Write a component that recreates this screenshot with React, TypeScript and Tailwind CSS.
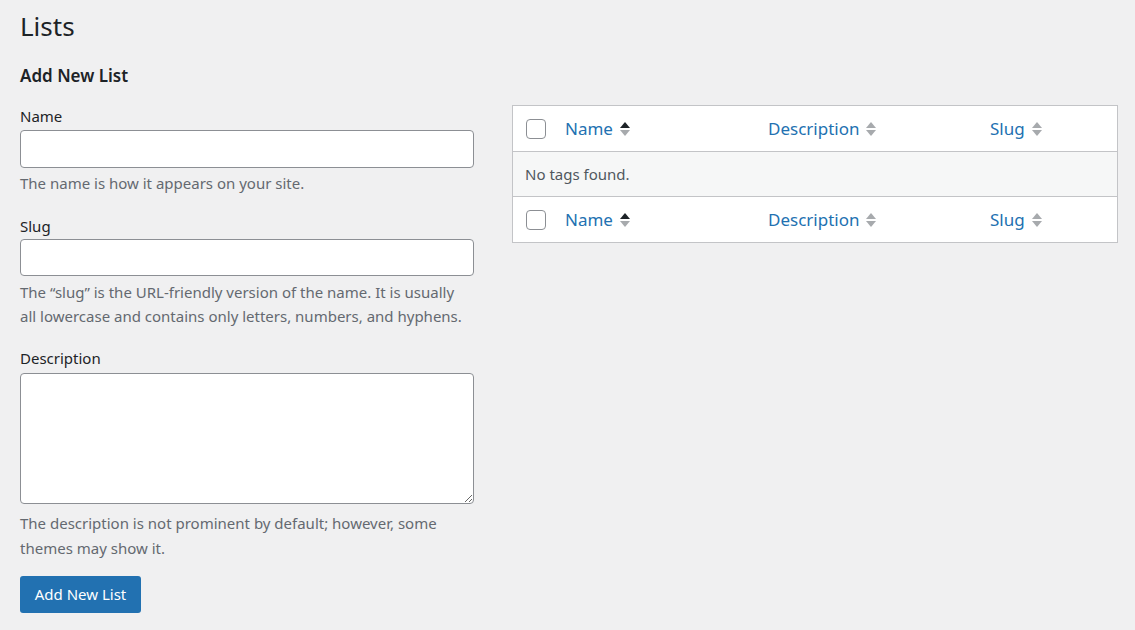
import React from "react";

function SortIcon({ active }: { active?: boolean }) {
  return (
    <svg width="12" height="16" viewBox="0 0 12 16" className="ml-[6px] shrink-0">
      <path d="M6 1 L11 7 L1 7 Z" fill={active ? "#1d2327" : "#a7aaad"} />
      <path d="M1 9 L11 9 L6 15 Z" fill="#a7aaad" />
    </svg>
  );
}

function Checkbox() {
  return <span className="block h-[20px] w-[20px] rounded-[4px] border border-[#8c8f94] bg-white" />;
}

function HeaderRow() {
  return (
    <div className="flex h-[45px] items-center bg-white">
      <div className="flex w-[40px] shrink-0 justify-end pr-[7px]">
        <Checkbox />
      </div>
      <div className="flex w-[203px] shrink-0 items-center pl-[12px] text-[17px] text-[#2271b1]">
        Name
        <SortIcon active />
      </div>
      <div className="flex w-[222px] shrink-0 items-center pl-[12px] text-[17px] text-[#2271b1]">
        Description
        <SortIcon />
      </div>
      <div className="flex flex-1 items-center pl-[12px] text-[17px] text-[#2271b1]">
        Slug
        <SortIcon />
      </div>
    </div>
  );
}

export default function App() {
  return (
    <div className="min-h-[630px] bg-[#f0f0f1] pl-[20px] pr-[17px] pt-[8px] font-['Noto_Sans',sans-serif] text-[#1d2327]">
      <h1 className="text-[26px] leading-[36px] font-normal">Lists</h1>
      <div className="flex gap-[38px]">
        <div className="w-[454px] shrink-0">
          <h2 className="mt-[21px] text-[17px] leading-[22px] font-semibold">Add New List</h2>
          <form className="mt-[18px]" onSubmit={(e) => e.preventDefault()}>
            <label htmlFor="name" className="block text-[15px] leading-[22px]">Name</label>
            <input
              id="name"
              type="text"
              className="mt-[3px] block h-[38px] w-[454px] rounded-[4px] border border-[#8c8f94] bg-white px-2"
            />
            <p className="mt-[3px] text-[15px] leading-[24px] text-[#646970]">The name is how it appears on your site.</p>

            <label htmlFor="slug" className="mt-[20px] block text-[15px] leading-[22px]">Slug</label>
            <input
              id="slug"
              type="text"
              className="mt-[2px] block h-[37px] w-[454px] rounded-[4px] border border-[#8c8f94] bg-white px-2"
            />
            <p className="mt-[4px] text-[15px] leading-[24px] text-[#646970]">
              The “slug” is the URL-friendly version of the name. It is usually all lowercase and contains only letters, numbers, and hyphens.
            </p>

            <label htmlFor="description" className="mt-[19px] block text-[15px] leading-[22px]">Description</label>
            <textarea
              id="description"
              className="mt-[4px] block h-[131px] w-[454px] rounded-[4px] border border-[#8c8f94] bg-white px-2"
            />
            <p className="mt-[7px] text-[15px] leading-[25px] text-[#646970]">
              The description is not prominent by default; however, some themes may show it.
            </p>

            <button
              type="submit"
              className="mt-[15px] h-[37px] w-[121px] rounded-[3px] bg-[#2271b1] text-[15px] text-white"
            >
              Add New List
            </button>
          </form>
        </div>

        <div className="mt-[61px] flex-1">
          <div className="border border-[#c3c4c7]">
            <HeaderRow />
            <div className="flex h-[46px] items-center border-y border-[#c3c4c7] bg-[#f6f7f7] pl-[12px] text-[15px] text-[#50575e]">
              No tags found.
            </div>
            <HeaderRow />
          </div>
        </div>
      </div>
    </div>
  );
}
